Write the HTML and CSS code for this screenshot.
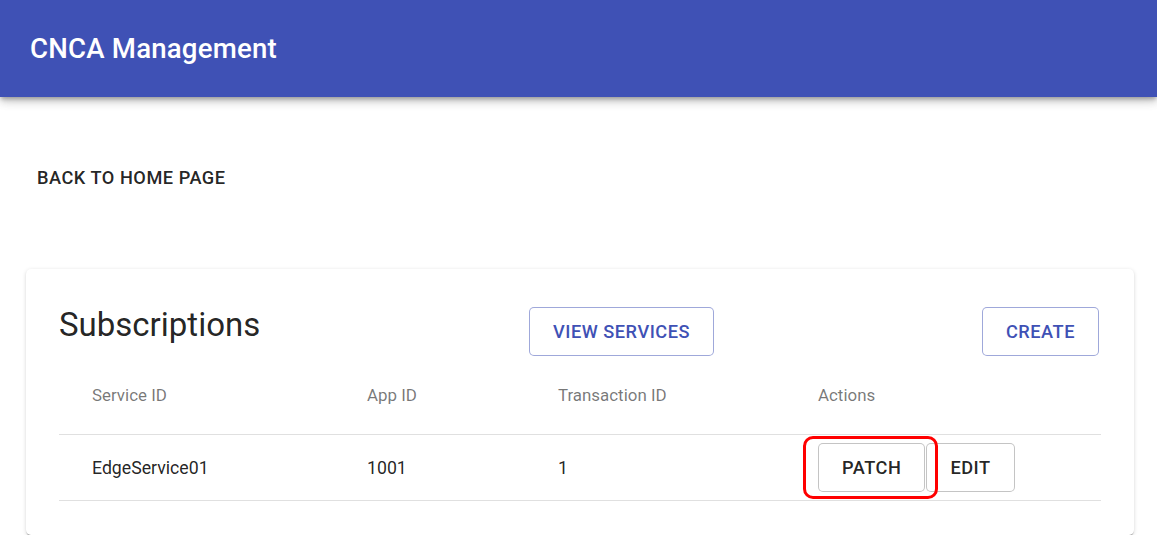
FILE: index.html
```html
<!DOCTYPE html>
<html>
<head>
<meta charset="utf-8">
<link rel="stylesheet" href="styles.css">
</head>
<body>
<header class="appbar">
  <h1 class="app-title">CNCA Management</h1>
</header>
<main class="content">
  <div class="back-row">
    <button class="btn btn-text">BACK TO HOME PAGE</button>
  </div>
  <section class="card">
    <div class="card-top">
      <h2 class="card-title">Subscriptions</h2>
      <button class="btn btn-outlined">VIEW SERVICES</button>
      <div></div>
      <button class="btn btn-outlined">CREATE</button>
    </div>
    <div class="table">
      <div class="row head">
        <div class="cell">Service ID</div>
        <div class="cell">App ID</div>
        <div class="cell">Transaction ID</div>
        <div class="cell">Actions</div>
      </div>
      <div class="row body">
        <div class="cell">EdgeService01</div>
        <div class="cell">1001</div>
        <div class="cell">1</div>
        <div class="cell">
          <div class="actions">
            <button class="btn btn-plain">PATCH</button>
            <button class="btn btn-plain">EDIT</button>
            <span class="highlight"></span>
          </div>
        </div>
      </div>
    </div>
  </section>
</main>
</body>
</html>
```

FILE: styles.css
```css
* { box-sizing: border-box; }
html, body {
  margin: 0;
  padding: 0;
  background: #fff;
  font-family: Roboto, "Liberation Sans", Arial, sans-serif;
  color: rgba(0,0,0,0.87);
}
.appbar {
  height: 97px;
  background: #3f51b5;
  display: flex;
  align-items: center;
  padding-left: 30px;
  box-shadow: 0 3px 4px -1px rgba(0,0,0,0.25), 0 5px 8px 0 rgba(0,0,0,0.14), 0 1px 14px 0 rgba(0,0,0,0.12);
}
.app-title {
  margin: 0;
  color: #fff;
  font-size: 27.6px;
  font-weight: 500;
  letter-spacing: 0.0075em;
}
.content {
  padding: 0 23px 0 26px;
}
.back-row {
  padding-top: 56px;
  display: flex;
}
.btn {
  font-family: Roboto, "Liberation Sans", Arial, sans-serif;
  font-size: 18.2px;
  font-weight: 500;
  letter-spacing: 0.02857em;
  height: 49px;
  background: #fff;
  border-radius: 5px;
  cursor: pointer;
  white-space: nowrap;
}
.btn-text {
  border: none;
  padding: 0 11px;
  color: rgba(0,0,0,0.87);
  background: transparent;
}
.btn-outlined {
  border: 1px solid rgba(63,81,181,0.5);
  color: #3f51b5;
  padding: 0 23px;
}
.btn-plain {
  border: 1px solid rgba(0,0,0,0.23);
  color: rgba(0,0,0,0.87);
  padding: 0 23px;
}
.card {
  margin-top: 67px;
  width: 1108px;
  height: 266px;
  background: #fff;
  border-radius: 5px;
  box-shadow: 0 2px 1px -1px rgba(0,0,0,0.2), 0 1px 1px 0 rgba(0,0,0,0.14), 0 1px 4px 0 rgba(0,0,0,0.14);
  padding: 38px 33px 0 33px;
}
.card-top {
  display: grid;
  grid-template-columns: 470px auto 1fr auto;
  align-items: start;
  padding-right: 2px;
}
.card-title {
  margin: 0;
  font-size: 33px;
  font-weight: 400;
  line-height: 36px;
  color: rgba(0,0,0,0.87);
}
.table {
  width: 100%;
}
.row {
  display: grid;
  grid-template-columns: 275px 191px 260px 1fr;
  align-items: center;
  border-bottom: 1px solid #e0e0e0;
}
.row.head {
  height: 79px;
  color: rgba(0,0,0,0.54);
  font-size: 16.9px;
}
.row.body {
  height: 66px;
  font-size: 17.7px;
}
.cell {
  padding-left: 33px;
}
.actions {
  position: relative;
  display: flex;
  margin-top: -1px;
}
.actions .btn + .btn {
  margin-left: 1px;
}
.highlight {
  position: absolute;
  left: -15px;
  top: -7px;
  width: 135px;
  height: 63px;
  border: 3px solid #ff0000;
  border-radius: 10px;
  pointer-events: none;
}
```
